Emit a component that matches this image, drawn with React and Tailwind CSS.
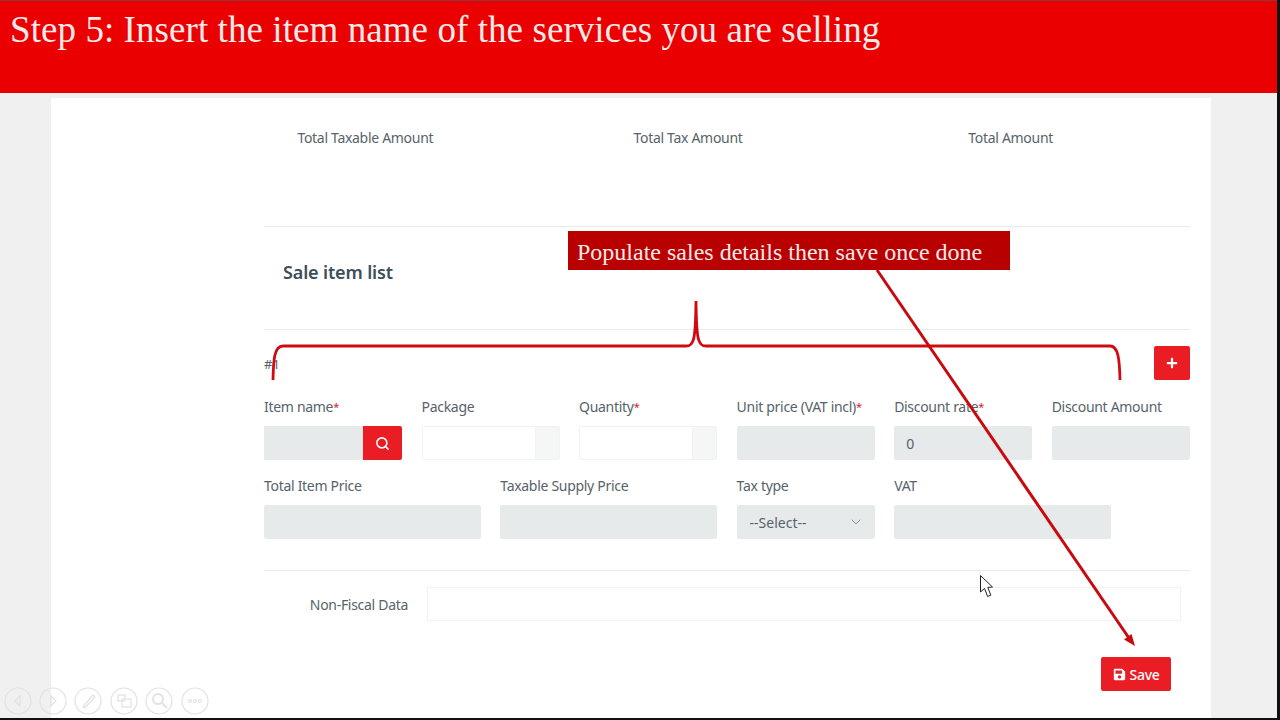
import { Search, ChevronDown } from "lucide-react";
import { FaPlus, FaSave } from "react-icons/fa";

const firstRow = [
    { label: "Package", required: false, kind: "addon" },
    { label: "Quantity", required: true, kind: "addon" },
    { label: "Unit price (VAT incl)", required: true, kind: "filled" },
    { label: "Discount rate", required: true, kind: "filled", value: "0" },
    { label: "Discount Amount", required: false, kind: "filled" },
];

const controls = [18, 53, 88, 124, 159, 195];

const Label = ({ text, required }) => (
    <label className="block h-[18px] mb-[10px] text-[14px] leading-[18px] text-[#56636a] whitespace-nowrap tracking-[-0.3px]">
        {text}
        {required && <span className="relative -top-[1px] text-[#d8202c] text-[11px]">*</span>}
    </label>
);

const Filled = ({ children, className = "" }) => (
    <div className={`h-[34px] bg-[#e7eaeb] rounded-[2px] flex items-center text-[14px] text-[#56636a] ${className}`}>
        {children}
    </div>
);

const Annotations = () => (
    <svg className="absolute inset-0 pointer-events-none" width="1280" height="720" viewBox="0 0 1280 720" fill="none">
        <path
            d="M273 380 C273.5 360 274 346 283 346 L686 346 C694 346 695.5 340 696 301 C696.5 340 698 346 706 346 L1110 346 C1118 346 1119.5 358 1120 380"
            stroke="#d00a10"
            strokeWidth="2.8"
        />
        <path d="M877 270 L1131 641" stroke="#c80a10" strokeWidth="3" />
        <path d="M1135 646 L1124 639.5 L1131.5 634 Z" fill="#c80a10" />
        <path
            d="M980.5 575.5 L980.5 592 L984.5 588.4 L987.6 596.5 L990.8 595.2 L987.8 587.4 L992.5 587 Z"
            fill="#fff"
            stroke="#222"
            strokeWidth="1"
        />
    </svg>
);

const SlideControls = () => (
    <svg className="absolute inset-0 pointer-events-none" width="1280" height="720" viewBox="0 0 1280 720" fill="none" stroke="#e2e2e2" strokeWidth="1.2">
        {controls.map((x) => (
            <circle key={x} cx={x} cy="701" r="13" />
        ))}
        <path d="M20 696 L15 701 L20 706 Z" />
        <path d="M51 696 L56 701 L51 706 Z" />
        <path d="M83 707 L93 695 L95 697 L85 708 Z" />
        <rect x="118" y="695" width="7" height="6" />
        <rect x="122" y="699" width="9" height="8" />
        <circle cx="158" cy="699" r="5" strokeWidth="2" />
        <path d="M162 703 L167 708" strokeWidth="2" />
        <circle cx="190" cy="701" r="1.5" />
        <circle cx="195" cy="701" r="1.5" />
        <circle cx="200" cy="701" r="1.5" />
    </svg>
);

const App = () => {
    return (
        <div className="relative w-[1280px] h-[720px] overflow-hidden bg-[#f0f0f0] border-r-[3px] border-b-2 border-[#111]" style={{ fontFamily: '"Noto Sans", sans-serif' }}>
            <header className="h-[93px] bg-[#ea0000] border-t border-[#8a3a3a] pl-[10px] pt-[8px]">
                <h1 className="text-[37px] leading-[42px] text-[#fbeaea] whitespace-nowrap tracking-[0.07px]" style={{ fontFamily: '"Liberation Serif", serif' }}>
                    Step 5: Insert the item name of the services you are selling
                </h1>
            </header>

            <main className="ml-[51px] mt-[5px] w-[1160px] h-[620px] bg-white pl-[213px] pr-[21px]">
                <div className="grid grid-cols-3 w-[968px] -ml-[60px] pt-[30px] h-[128px] text-center text-[14px] leading-[19px] text-[#56636a] tracking-[-0.3px]">
                    <div>Total Taxable Amount</div>
                    <div>Total Tax Amount</div>
                    <div>Total Amount</div>
                </div>

                <div className="border-t border-[#e9ecec] h-[103px] pl-[19px] pt-[33px]">
                    <h2 className="text-[18px] leading-[24px] font-semibold text-[#3d4f58] tracking-[-0.15px]">Sale item list</h2>
                </div>

                <div className="border-t border-[#e9ecec] h-[69px] pt-[16px] flex justify-between">
                    <span className="text-[13px] leading-[36px] text-[#56636a]">#1</span>
                    <button className="w-[36px] h-[34px] bg-[#ea1c24] rounded-[2px] flex items-center justify-center text-white">
                        <FaPlus className="w-[12px] h-[12px]" />
                    </button>
                </div>

                <div className="grid grid-cols-12 gap-x-[19.2px]">
                    <div className="col-span-2">
                        <Label text="Item name" required />
                        <div className="flex h-[34px]">
                            <div className="flex-1 bg-[#e7eaeb]" />
                            <button className="w-[39px] bg-[#ea1c24] rounded-r-[2px] flex items-center justify-center text-white">
                                <Search className="w-[15px] h-[15px]" strokeWidth={2.5} />
                            </button>
                        </div>
                    </div>
                    {firstRow.map((field) => (
                        <div key={field.label} className="col-span-2">
                            <Label text={field.label} required={field.required} />
                            {field.kind === "addon" ? (
                                <div className="flex h-[34px] border border-[#f1f3f3] rounded-[2px]">
                                    <div className="flex-1 bg-white" />
                                    <div className="w-[24px] bg-[#f5f7f7] border-l border-[#f1f3f3]" />
                                </div>
                            ) : (
                                <Filled className="pl-[12px]">{field.value}</Filled>
                            )}
                        </div>
                    ))}
                </div>

                <div className="grid grid-cols-12 gap-x-[19.2px] mt-[17px]">
                    <div className="col-span-3">
                        <Label text="Total Item Price" />
                        <Filled />
                    </div>
                    <div className="col-span-3">
                        <Label text="Taxable Supply Price" />
                        <Filled />
                    </div>
                    <div className="col-span-2">
                        <Label text="Tax type" />
                        <Filled className="pl-[13px] pr-[11px] justify-between text-[#6f7b81]">
                            <span>--Select--</span>
                            <ChevronDown className="w-[16px] h-[16px] text-[#8b969b]" strokeWidth={1.5} />
                        </Filled>
                    </div>
                    <div className="col-span-3">
                        <Label text="VAT" />
                        <Filled />
                    </div>
                </div>

                <div className="border-t border-[#e9ecec] mt-[31px] pt-[16px] flex items-center pr-[9px]">
                    <span className="w-[144px] text-right text-[14px] text-[#56636a] tracking-[-0.3px]">Non-Fiscal Data</span>
                    <div className="ml-[19px] flex-1 h-[34px] border border-[#f1f3f3]" />
                </div>

                <div className="flex justify-end mt-[36px] pr-[19px]">
                    <button className="w-[70px] h-[34px] bg-[#ea1c24] rounded-[2px] flex items-center justify-center gap-[4px] text-white text-[14px] font-medium tracking-[-0.3px]">
                        <FaSave className="w-[13px] h-[13px]" />
                        Save
                    </button>
                </div>
            </main>

            <div className="absolute left-[568px] top-[231px] w-[442px] h-[39px] bg-[#b80000] pl-[9px] text-[24px] leading-[43px] text-[#fbeaea] whitespace-nowrap" style={{ fontFamily: '"Liberation Serif", serif' }}>
                Populate sales details then save once done
            </div>
            <Annotations />
            <SlideControls />
        </div>
    );
};

export default App;
